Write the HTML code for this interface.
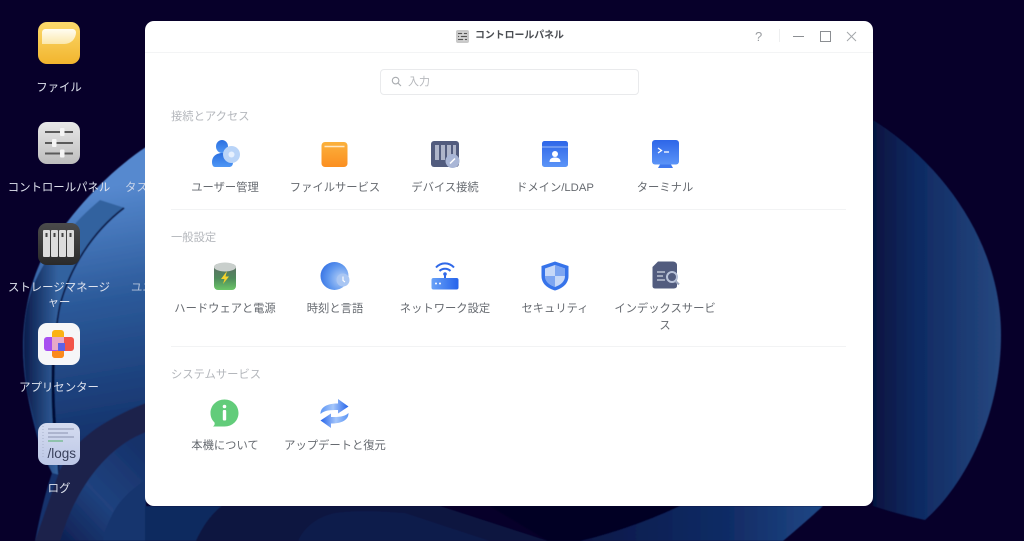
<!DOCTYPE html>
<html lang="ja"><head><meta charset="utf-8"><title>コントロールパネル</title>
<style>
html,body{margin:0;padding:0}
body{width:1024px;height:541px;overflow:hidden;position:relative;background:#07002a;font-family:"Liberation Sans","Noto Sans CJK JP",sans-serif}
.a{position:absolute}
.dl{position:absolute;width:112px;text-align:center;color:#dfe3ee;font-size:11.4px;line-height:15px;filter:blur(.25px)}
.l{position:absolute;width:110px;text-align:center;color:#666a70;font-size:11.3px;line-height:17px;filter:blur(.3px)}
.h{position:absolute;left:171px;color:#b4b7bc;font-size:11.3px;line-height:16px;filter:blur(.25px)}
.hr{position:absolute;left:171px;width:675px;height:1px;background:#f2f3f4}
.di{position:absolute;left:38px;width:42px;height:42px;border-radius:9px;overflow:hidden}
svg{position:absolute;overflow:visible}
</style></head><body>
<svg class="a" style="left:0;top:0" width="1024" height="541" viewBox="0 0 1024 541">
<defs>
<linearGradient id="bg1" gradientUnits="userSpaceOnUse" x1="873" y1="0" x2="1001" y2="0"><stop offset="0" stop-color="#061440"/><stop offset=".35" stop-color="#0f2a62"/><stop offset="1" stop-color="#264880"/></linearGradient>
<linearGradient id="bgL" gradientUnits="userSpaceOnUse" x1="90" y1="190" x2="130" y2="430"><stop offset="0" stop-color="#5689cf"/><stop offset=".45" stop-color="#2c5a9a"/><stop offset="1" stop-color="#15336c"/></linearGradient>
<linearGradient id="bgO" gradientUnits="userSpaceOnUse" x1="24" y1="0" x2="58" y2="0"><stop offset="0" stop-color="#0b1d4c"/><stop offset="1" stop-color="#33629f"/></linearGradient>
<linearGradient id="bgB" gradientUnits="userSpaceOnUse" x1="50" y1="540" x2="145" y2="450"><stop offset="0" stop-color="#0c1c4e"/><stop offset=".5" stop-color="#20427e"/><stop offset="1" stop-color="#16316a"/></linearGradient>
<linearGradient id="bgR" gradientUnits="userSpaceOnUse" x1="580" y1="0" x2="825" y2="0"><stop offset="0" stop-color="#0a1848"/><stop offset=".65" stop-color="#122e68"/><stop offset="1" stop-color="#204886"/></linearGradient>
<filter id="soft"><feGaussianBlur stdDeviation=".6"/></filter>
</defs>
<g filter="url(#soft)">
<!-- right lobe -->
<path d="M873 120C945 165 1001 245 1001 335C1001 415 965 485 925 520C905 516 885 510 873 506Z" fill="url(#bg1)"/>
<!-- left big shape -->
<path d="M146 147C108 172 67 215 40 263C28 290 23 320 23 347C23 380 30 410 38 440C42 455 48 465 52 473C46 490 40 515 35 541H146Z" fill="url(#bgL)"/>
<!-- left outer crescent -->
<path d="M125 208C95 232 72 265 62 300C54 330 53 370 54 400C55 430 58 455 60 475L52 473C44 455 34 420 28 395C22 360 22 320 30 295C40 262 70 225 100 200Z" fill="url(#bgO)"/>
<path d="M124 208C92 232 70 268 60 305C54 335 53 370 54 400C55 430 58 455 59 475" fill="none" stroke="#0c1c4c" stroke-width="1.800"/>
<path d="M54 345C52 380 53 420 56 440" fill="none" stroke="#060f38" stroke-width="3"/>
<!-- dark band -->
<path d="M146 403C115 415 90 430 75 447C66 458 60 468 57 478L35 541H62C72 515 85 490 100 468C112 452 128 440 146 432Z" fill="#1c244b"/>
<!-- lower lobes -->
<path d="M146 432C120 442 100 462 85 485C72 505 65 525 60 541H146Z" fill="url(#bgB)"/>
<path d="M146 480C130 490 118 502 112 515C107 525 104 533 103 541H146Z" fill="#17346e"/>
<!-- bottom strip -->
<path d="M145 506H222C210 515 202 528 196 541H145Z" fill="#10295f"/>
<path d="M222 506H440L548 541H196C202 528 210 515 222 506Z" fill="#0a1640"/>
<path d="M298 541C305 525 322 513 344 512C365 510 390 512 405 513L490 541Z" fill="#0c1b4b"/>
<path d="M490 506H680C650 520 615 533 580 541H548Z" fill="#030524" opacity=".9"/>
<path d="M680 506H823C810 518 796 530 783 541H580C615 533 650 520 680 506Z" fill="url(#bgR)"/>
</g>
</svg>

<!-- desktop icons -->
<div class="di" style="top:22px;background:linear-gradient(#fbd96c,#f2b52e)"><div class="a" style="left:4px;top:7px;width:34px;height:15px;border-radius:4px 4px 14px 0;background:linear-gradient(#fffdf2,#fbe8ac)"></div></div>
<div class="dl" style="left:3px;top:81px">ファイル</div>

<div class="di" style="top:122px;background:linear-gradient(#e8e8e8,#bdbdbd)">
<svg width="42" height="42" viewBox="0 0 42 42"><g stroke="#5a5a5a" stroke-width="2"><path d="M7 10H35M7 21H35M7 31.500H35"/></g><g fill="#f5f5f5"><rect x="22" y="6" width="4.500" height="8" rx="1"/><rect x="14" y="17" width="4.500" height="8" rx="1"/><rect x="22" y="27.500" width="4.500" height="8" rx="1"/></g></svg></div>
<div class="dl" style="left:3px;top:181px;white-space:nowrap">コントロールパネル</div>
<div class="dl" style="left:125px;top:181px;text-align:left;white-space:nowrap;overflow:hidden;width:20px;opacity:.85">タス</div>

<div class="di" style="top:223px;background:linear-gradient(#4b4b4b,#2a2a2a)">
<svg width="42" height="42" viewBox="0 0 42 42"><g fill="#dcdcdc"><rect x="5" y="7" width="7" height="27" rx="1"/><rect x="13" y="7" width="7" height="27" rx="1"/><rect x="21" y="7" width="7" height="27" rx="1"/><rect x="29" y="7" width="7" height="27" rx="1"/></g><g fill="#444"><rect x="7.500" y="10" width="2" height="4"/><rect x="15.500" y="10" width="2" height="4"/><rect x="23.500" y="10" width="2" height="4"/><rect x="31.500" y="10" width="2" height="4"/></g></svg></div>
<div class="dl" style="left:3px;top:281px">ストレージマネージャー</div>
<div class="dl" style="left:131px;top:281px;width:14px;text-align:left;white-space:nowrap;overflow:hidden;opacity:.75">ユニ</div>

<div class="di" style="top:323px;background:#f6f6f8">
<svg width="42" height="42" viewBox="0 0 42 42"><rect x="14" y="7" width="12" height="28" rx="3" fill="#fbb313"/><rect x="14" y="24" width="12" height="11" rx="3" fill="#fb8a1c"/><rect x="6" y="14" width="15" height="14" rx="3" fill="#a74ff0"/><rect x="22" y="14" width="14" height="14" rx="3" fill="#f2554a"/><rect x="14" y="14" width="12" height="13" fill="#e8a9c8"/><rect x="20" y="20" width="7" height="8" fill="#5e62e8"/></svg></div>
<div class="dl" style="left:3px;top:381px">アプリセンター</div>

<div class="di" style="top:423px;background:linear-gradient(#d5dcf0,#bcc7e6)">
<svg width="42" height="42" viewBox="0 0 42 42"><g stroke-width="1" fill="none"><path d="M5 3V36" stroke="#a9b2cc" stroke-dasharray="1 2"/><path d="M10 6H36M10 10H30M10 14H36" stroke="#8a92b0"/><path d="M10 18H25" stroke="#54b06c"/></g><text x="9.500" y="35" font-size="13.500" fill="#39415c" font-family="Liberation Sans">/logs</text></svg></div>
<div class="dl" style="left:3px;top:482px">ログ</div>

<!-- window -->
<div class="a" style="left:145px;top:21px;width:728px;height:485px;background:#fff;border-radius:9px"></div>
<div class="a" style="left:145px;top:52px;width:728px;height:1px;background:#f3f4f5"></div>

<svg style="left:456px;top:30px" width="13" height="13" viewBox="0 0 13 13"><rect width="13" height="13" rx="2" fill="#c9c9c9"/><path d="M2 3.500H11M2 6.500H11M2 9.500H11" stroke="#555"/><path d="M7 2.500V4.500M4 5.500V7.500M8 8.500V10.500" stroke="#eee" stroke-width="1.400"/></svg>
<div class="a" style="left:475px;top:28px;font-size:9.900px;line-height:16px;color:#4a4d52;white-space:nowrap;font-weight:700;filter:blur(.2px)">コントロールパネル</div>
<div class="a" style="left:755px;top:28px;font-size:13px;line-height:17px;color:#9a9da1">?</div>
<div class="a" style="left:779px;top:29px;width:1px;height:13px;background:#eeeff0"></div>
<svg style="left:793px;top:30px" width="66" height="13" viewBox="0 0 66 13" fill="none" stroke="#8b8e92"><path d="M0 6.500H11"/><rect x="27.500" y="1.500" width="10" height="10"/><path d="M54 2L63 11M63 2L54 11" stroke="#a4a7ab"/></svg>

<div class="a" style="left:380px;top:69px;width:257px;height:24px;border:1px solid #e9eaec;border-radius:4px"></div>
<svg style="left:391px;top:76px" width="11" height="11" viewBox="0 0 11 11" fill="none" stroke="#a9acb0" stroke-width="1.100"><circle cx="4.600" cy="4.600" r="3.300"/><path d="M7 7L10 10"/></svg>
<div class="a" style="left:408px;top:74px;font-size:11px;line-height:16px;color:#b6b8bc">入力</div>

<div class="h" style="top:109px">接続とアクセス</div>
<div class="hr" style="top:209px"></div>
<div class="h" style="top:230px">一般設定</div>
<div class="hr" style="top:346px"></div>
<div class="h" style="top:367px">システムサービス</div>

<!-- row 1 icons -->
<svg style="left:211px;top:139px" width="30" height="30" viewBox="0 0 30 30"><defs><linearGradient id="u" x1="0" y1="0" x2="0" y2="1"><stop offset="0" stop-color="#2b6fe0"/><stop offset="1" stop-color="#4f97f5"/></linearGradient></defs><ellipse cx="11" cy="7.500" rx="6" ry="6.500" fill="url(#u)"/><path d="M1 23C1 17 6 14 11 14C16 14 20 17 22 23C22 27 20 28 18 28H4C2 28 1 26 1 23Z" fill="url(#u)"/><circle cx="20.500" cy="15.500" r="8.500" fill="#b9d4f8"/><circle cx="20.500" cy="15.500" r="3" fill="#e6f0fe"/></svg>
<svg style="left:321px;top:141px" width="27" height="27" viewBox="0 0 27 27"><defs><linearGradient id="f" x1="0" y1="0" x2="0" y2="1"><stop offset="0" stop-color="#fbb13c"/><stop offset="1" stop-color="#fb8f21"/></linearGradient></defs><rect x="0.500" y="1" width="26" height="25" rx="3.500" fill="url(#f)"/><path d="M3.500 5.500H23.500" stroke="#ffe8c4" stroke-width="1.600"/></svg>
<svg style="left:431px;top:141px" width="30" height="28" viewBox="0 0 30 28"><rect width="28" height="26" rx="3" fill="#525c7e"/><g fill="#aeb5ca"><rect x="4" y="4" width="4" height="15"/><rect x="10" y="4" width="4" height="15"/><rect x="16" y="4" width="4" height="15"/><rect x="22" y="4" width="3" height="13"/></g><circle cx="21.500" cy="20" r="7" fill="#a9b6d6"/><path d="M19 22.500L24 17.500" stroke="#fff" stroke-width="1.500"/></svg>
<svg style="left:542px;top:141px" width="26" height="27" viewBox="0 0 26 27"><defs><linearGradient id="d" x1="0" y1="0" x2="0" y2="1"><stop offset="0" stop-color="#2e66e8"/><stop offset="1" stop-color="#5b94f7"/></linearGradient></defs><rect width="26" height="26" rx="2.500" fill="url(#d)"/><path d="M0 6H26" stroke="#9dbcf6"/><circle cx="13" cy="13" r="3" fill="#fff"/><path d="M7.500 21C7.500 17.500 10 16.500 13 16.500S18.500 17.500 18.500 21Z" fill="#fff"/></svg>
<svg style="left:652px;top:140px" width="27" height="29" viewBox="0 0 27 29"><rect width="27" height="24.500" rx="3" fill="url(#d)"/><path d="M6 8L9.500 10.500L6 13" fill="none" stroke="#fff" stroke-width="1.300"/><path d="M12 12H17" stroke="#fff" stroke-width="1.300"/><path d="M6 28H21L19 24.500H8Z" fill="#3f78ee"/></svg>

<div class="l" style="left:170px;top:180px">ユーザー管理</div>
<div class="l" style="left:280px;top:180px">ファイルサービス</div>
<div class="l" style="left:390px;top:180px">デバイス接続</div>
<div class="l" style="left:500px;top:180px">ドメイン/LDAP</div>
<div class="l" style="left:610px;top:180px">ターミナル</div>

<!-- row 2 icons -->
<svg style="left:213px;top:261px" width="24" height="30" viewBox="0 0 24 30"><defs><linearGradient id="b" x1="0" y1="0" x2="0" y2="1"><stop offset="0" stop-color="#5f6b66"/><stop offset=".55" stop-color="#4f8a5c"/><stop offset="1" stop-color="#6cc667"/></linearGradient></defs><rect x="1" y="3" width="22" height="26" rx="4" fill="url(#b)"/><ellipse cx="12" cy="6" rx="11" ry="4.500" fill="#c9cfcc"/><path d="M14 10L8 18H11.500L10 23L16 15.500H12.500Z" fill="#f6d32b"/></svg>
<svg style="left:320px;top:261px" width="31" height="30" viewBox="0 0 31 30"><defs><radialGradient id="c" cx=".75" cy=".6" r=".8"><stop offset="0" stop-color="#b6d0f7"/><stop offset=".6" stop-color="#5f97ee"/><stop offset="1" stop-color="#3672e4"/></radialGradient></defs><circle cx="14.500" cy="15" r="14" fill="url(#c)"/><circle cx="23" cy="19" r="6.500" fill="#a9c6f3"/><path d="M23 15.500V19.500L25 21" fill="none" stroke="#fff" stroke-width="1.100"/></svg>
<svg style="left:431px;top:261px" width="28" height="29" viewBox="0 0 28 29"><defs><linearGradient id="r" x1="0" x2="1" y1="0" y2="0"><stop offset="0" stop-color="#69a2f7"/><stop offset="1" stop-color="#2563eb"/></linearGradient></defs><g fill="none" stroke="#2f68e8" stroke-width="2"><path d="M5 6.500C10 1 18 1 23 6.500"/><path d="M8.500 10C11.500 7 16.500 7 19.500 10"/></g><circle cx="14" cy="13" r="1.800" fill="#2f68e8"/><rect x="13" y="13" width="2" height="5" fill="#2f68e8"/><rect x="0.500" y="17" width="27" height="11.500" rx="2" fill="url(#r)"/><circle cx="5" cy="22.500" r="1" fill="#fff"/><circle cx="9" cy="22.500" r="1" fill="#fff"/></svg>
<svg style="left:541px;top:261px" width="28" height="30" viewBox="0 0 28 30"><path d="M14 .5L27.500 5V15C27.500 23 21 27.500 14 29.500C7 27.500 .5 23 .5 15V5Z" fill="#3673ea"/><path d="M14 4L24 7.500V15C24 20.500 19.500 24 14 26C8.500 24 4 20.500 4 15V7.500Z" fill="#c6d8f8"/><path d="M14 4V15H24V7.500ZM14 15V26C8.500 24 4 20.500 4 15Z" fill="#7ea6f1"/></svg>
<svg style="left:652px;top:261px" width="28" height="29" viewBox="0 0 28 29"><path d="M6 .5H21C23 .5 25 2 25 4V25C25 27 23 27.500 21 27.500H3C1 27.500 .5 26 .5 25V6Z" fill="#525c7e"/><path d="M5 11H13M5 15H11M5 19H13" stroke="#d0d5e2" stroke-width="1.300"/><circle cx="20" cy="16" r="5" fill="#525c7e" stroke="#b9c3d9" stroke-width="2"/><path d="M23.500 20L27 23.500" stroke="#9fa9c0" stroke-width="2"/></svg>

<div class="l" style="left:170px;top:301px;white-space:nowrap">ハードウェアと電源</div>
<div class="l" style="left:280px;top:301px">時刻と言語</div>
<div class="l" style="left:390px;top:301px;white-space:nowrap">ネットワーク設定</div>
<div class="l" style="left:500px;top:301px">セキュリティ</div>
<div class="l" style="left:610px;top:301px">インデックスサービス</div>

<!-- row 3 icons -->
<svg style="left:210px;top:399px" width="29" height="29" viewBox="0 0 29 29"><path d="M14.500 .5C22.500 .5 28.500 6.500 28.500 14C28.500 21.500 22.500 27.500 14.500 27.500H3C4.500 26.500 5 25 4.500 23.500C2 21 .5 18 .5 14C.5 6.500 6.500 .5 14.500 .5Z" fill="#62cc7a"/><circle cx="14.500" cy="7.500" r="1.800" fill="#fff"/><rect x="12.800" y="11" width="3.400" height="10.500" rx="1" fill="#fff"/></svg>
<svg style="left:320px;top:399px" width="29" height="29" viewBox="0 0 29 29"><defs><linearGradient id="s" x1="0" x2="1" y1="0" y2="0"><stop offset="0" stop-color="#5b95f5"/><stop offset=".45" stop-color="#a5c6fa"/><stop offset="1" stop-color="#2463ea"/></linearGradient><linearGradient id="s2" x1="1" x2="0" y1="0" y2="0"><stop offset="0" stop-color="#5b95f5"/><stop offset=".45" stop-color="#a5c6fa"/><stop offset="1" stop-color="#2463ea"/></linearGradient></defs><path d="M.5 15C.5 8 7 4.500 18 4.500V0L28.500 7.500L18 14.500V11C10 11 5 11 .5 15Z" fill="url(#s)"/><path d="M28.500 14C28.500 21 22 24.500 11 24.500V29L.5 21.500L11 14.500V18C19 18 24 18 28.500 14Z" fill="url(#s2)"/></svg>

<div class="l" style="left:170px;top:438px">本機について</div>
<div class="l" style="left:280px;top:438px;white-space:nowrap">アップデートと復元</div>
</body></html>
